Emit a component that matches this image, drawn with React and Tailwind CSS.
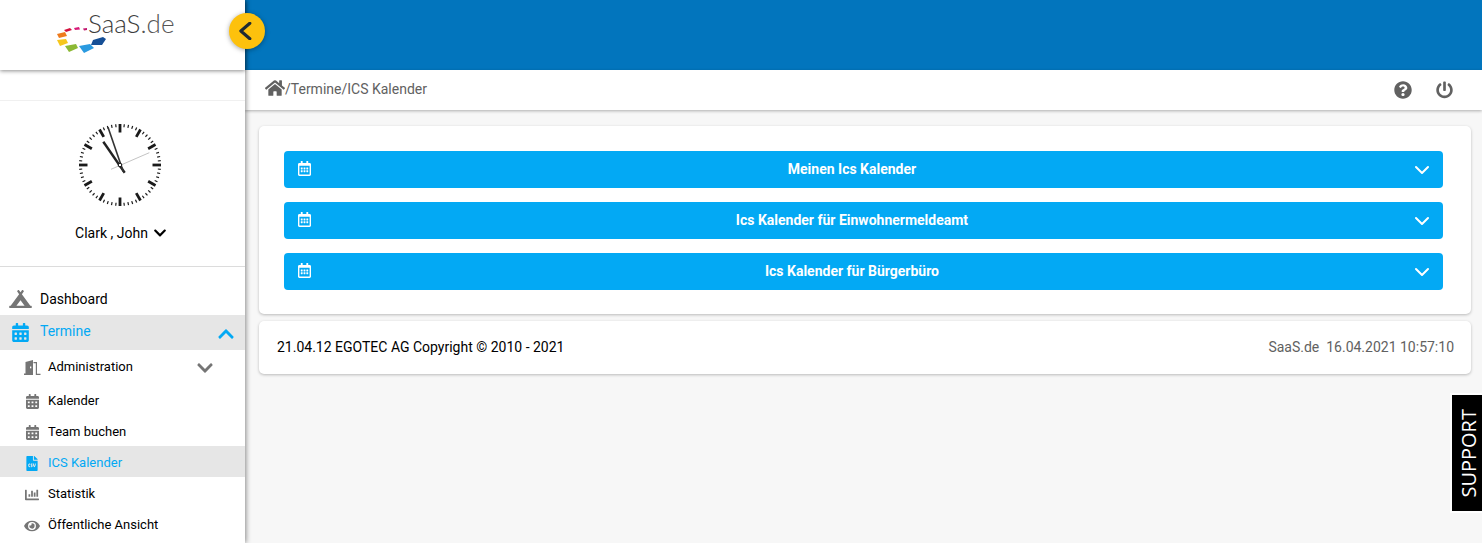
import { FaCampground, FaCalendarAlt, FaRegCalendarAlt, FaFileCsv, FaChartBar, FaEye, FaHome, FaQuestionCircle, FaPowerOff, FaChevronDown, FaChevronUp } from 'react-icons/fa'

function Logo() {
  return (
    <svg width="50" height="30" viewBox="0 0 50 30" className="block">
      <path d="M7 5l6-2 2 2-6 2z" fill="#d3123f" />
      <path d="M17 3l5-1 1 2.500-5 .5z" fill="#d81b78" />
      <path d="M26 3.500l4-.5v2l-3 .5z" fill="#c2186f" />
      <path d="M0 9l8-2 2 4-8 2z" fill="#ee7b1d" />
      <path d="M0 15l9-1 2 4-8 3z" fill="#f6c71d" />
      <path d="M8 21l11-2 2 4-9 4z" fill="#8cb935" />
      <path d="M22 21l11-2 4 4-10 5z" fill="#2a9ae0" />
      <path d="M36 15l10-3 3 2-4 6H34z" fill="#164f96" />
    </svg>
  )
}

function Clock() {
  const ticks = Array.from({ length: 60 }, (_, i) => i)
  return (
    <svg width="84" height="84" viewBox="-42 -42 84 84" className="block">
      {ticks.map((i) => {
        const major = i % 5 === 0
        const a = (i * 6 * Math.PI) / 180
        const r1 = major ? 32.500 : 38
        const r2 = 41
        return (
          <line
            key={i}
            x1={Math.sin(a) * r1}
            y1={-Math.cos(a) * r1}
            x2={Math.sin(a) * r2}
            y2={-Math.cos(a) * r2}
            stroke="#1a1a1a"
            strokeWidth={major ? 2.800 : 1.200}
          />
        )
      })}
      <line x1="-9" y1="4.300" x2="29.300" y2="-12.300" stroke="#c4c4c4" strokeWidth="1" />
      <line x1="4.700" y1="7.700" x2="-16.700" y2="-23.300" stroke="#222" strokeWidth="2.400" />
      <line x1="3.300" y1="6.700" x2="-12" y2="-37.700" stroke="#333" strokeWidth="1.600" />
      <circle cx="0" cy="0" r="1.800" fill="#fff" stroke="#111" strokeWidth="1" />
    </svg>
  )
}

function DoorIcon() {
  return (
    <svg width="18" height="15" viewBox="0 0 18 15" className="block">
      <path d="M1 15V13.500H2.500V2L10 0V15Z" fill="#757575" />
      <rect x="7" y="6.500" width="1.300" height="1.800" fill="#fff" />
      <path d="M10.500 2H14V13.800H17.500V15H12.800V3.300H10.500Z" fill="#757575" />
    </svg>
  )
}

function Chevron({ points, className, width = 2 }) {
  return (
    <svg viewBox="0 0 14 14" fill="none" stroke="currentColor" strokeWidth={width} className={className}>
      <polyline points={points} strokeLinecap="round" strokeLinejoin="round" />
    </svg>
  )
}

const subItems = [
  { label: 'Kalender', Icon: FaCalendarAlt, size: 'h-[15px] w-[13px]' },
  { label: 'Team buchen', Icon: FaCalendarAlt, size: 'h-[15px] w-[13px]' },
  { label: 'ICS Kalender', Icon: FaFileCsv, size: 'h-[15px] w-[12px]', active: true },
  { label: 'Statistik', Icon: FaChartBar, size: 'h-[14px] w-[16px]' },
  { label: 'Öffentliche Ansicht', Icon: FaEye, size: 'h-[14px] w-[16px]' },
]

const calendars = ['Meinen Ics Kalender', 'Ics Kalender für Einwohnermeldeamt', 'Ics Kalender für Bürgerbüro']

export default function App() {
  return (
    <div className="relative flex h-[543px] w-[1482px] overflow-hidden bg-[#f7f7f7] font-['Roboto',sans-serif] text-sm text-black">
      <aside className="relative z-10 flex w-[245px] shrink-0 flex-col bg-white shadow-[1px_0_5px_rgba(0,0,0,0.45)]">
        <div className="h-[70px] shrink-0 bg-white pl-[57px] shadow-[0_1px_4px_rgba(0,0,0,0.45)]">
          <div className="relative h-[70px] w-[120px]">
            <div className="absolute top-[25px] left-0">
              <Logo />
            </div>
            <span className="absolute top-[8px] left-[31px] font-['Lato',sans-serif] text-[26px] leading-[30px] font-light text-[#3c3c3c]">
              SaaS<span className="text-[#555]">.de</span>
            </span>
          </div>
        </div>

        <div className="mt-[30px] flex h-[167px] shrink-0 flex-col items-center border-y border-y-[#f0f0f0] border-b-[#dcdcdc] bg-white pr-[5px]">
          <div className="mt-[22px]">
            <Clock />
          </div>
          <div className="mt-[16px] flex translate-x-[1px] items-center gap-[5px] text-[14px] leading-5 text-black">
            Clark , John <FaChevronDown className="h-[14px] w-[14px]" />
          </div>
        </div>

        <nav className="pt-[16px]">
          <div className="flex h-[32px] items-center">
            <FaCampground className="ml-[9px] h-[18px] w-[23px] text-[#757575]" />
            <span className="ml-[8px] text-[14px]">Dashboard</span>
          </div>
          <div className="flex h-[35px] items-center bg-[#e6e6e6] text-[#03a9f4]">
            <FaCalendarAlt className="ml-[12px] h-[19px] w-[17px]" />
            <span className="ml-[11px] -translate-y-[2px] text-[14px]">Termine</span>
            <FaChevronUp className="mr-[10px] ml-auto h-[18px] w-[18px] translate-y-[1px]" />
          </div>
          <div className="flex h-[34px] items-center">
            <div className="ml-[23px] w-[18px]">
              <DoorIcon />
            </div>
            <span className="ml-[7px] text-[13px]">Administration</span>
            <FaChevronDown className="mr-[31px] ml-auto h-[18px] w-[18px] translate-y-[1px] text-[#757575]" />
          </div>
          {subItems.map(({ label, Icon, size, active }) => (
            <div key={label} className={`flex h-[31px] items-center pt-[4px] ${active ? 'bg-[#e6e6e6] text-[#03a9f4]' : 'text-black'}`}>
              <div className={`ml-[23px] flex w-[18px] justify-center ${active ? 'text-[#03a9f4]' : 'text-[#757575]'}`}>
                <Icon className={size} />
              </div>
              <span className="ml-[7px] text-[13px]">{label}</span>
            </div>
          ))}
        </nav>
      </aside>

      <main className="flex min-w-0 flex-1 flex-col">
        <div className="h-[70px] shrink-0 bg-[#0275bd]" />
        <div className="flex h-[40px] shrink-0 items-center bg-white pr-[29px] pl-[20px] text-[#616161] shadow-[0_1px_3px_rgba(0,0,0,0.3)]">
          <FaHome className="h-[20px] w-[20px] -translate-y-[2px]" />
          <span className="-translate-y-[1px] text-[14px]">/Termine/ICS Kalender</span>
          <div className="ml-auto flex items-center gap-[25px]">
            <FaQuestionCircle className="h-[18px] w-[18px] translate-x-[1px]" />
            <FaPowerOff className="h-[18px] w-[17px]" />
          </div>
        </div>

        <div className="flex flex-col gap-[7px] pt-[16px] pr-[11px] pl-[14px]">
          <section className="flex flex-col gap-[14px] rounded-[5px] bg-white pt-[25px] pr-[28px] pb-[24px] pl-[25px] shadow-[0_1px_3px_rgba(0,0,0,0.25)]">
            {calendars.map((title) => (
              <button
                key={title}
                type="button"
                className="flex h-[37px] items-center rounded-[4px] bg-[#03a9f4] pr-[14px] pl-[14px] text-[14px] font-bold text-white"
              >
                <FaRegCalendarAlt className="h-[15px] w-[13px] -translate-y-[1px]" />
                <span className="flex-1 -translate-y-[1px] pr-[22px] text-center">{title}</span>
                <Chevron points="1,4 7,10 13,4" className="h-[14px] w-[14px]" />
              </button>
            ))}
          </section>
          <footer className="flex h-[53px] items-center justify-between rounded-[5px] bg-white pr-[17px] pl-[18px] text-[14px] shadow-[0_1px_3px_rgba(0,0,0,0.25)]">
            <span className="-translate-y-[1px]">21.04.12 EGOTEC AG Copyright © 2010 - 2021</span>
            <span className="-translate-y-[1px] text-[#616161]">SaaS.de&nbsp;&nbsp;16.04.2021 10:57:10</span>
          </footer>
        </div>
      </main>

      <button
        type="button"
        className="absolute top-[13px] left-[229px] z-20 flex h-[36px] w-[36px] items-center justify-center rounded-full bg-[#fdc10d] text-[#1f2a33] shadow-[0_1px_5px_rgba(0,0,0,0.35)]"
      >
        <Chevron points="10,1 3,7 10,13" width={2.4} className="h-[18px] w-[18px] -translate-x-[1px]" />
      </button>

      <div className="absolute top-[395px] right-0 z-20 flex h-[116px] w-[30px] items-center justify-center bg-black pl-[5px] shadow-[0_0_0_2px_#fff]">
        <span className="-rotate-90 font-['Open_Sans',sans-serif] text-[20px] font-medium whitespace-nowrap text-white">
          SUPPORT
        </span>
      </div>
    </div>
  )
}
